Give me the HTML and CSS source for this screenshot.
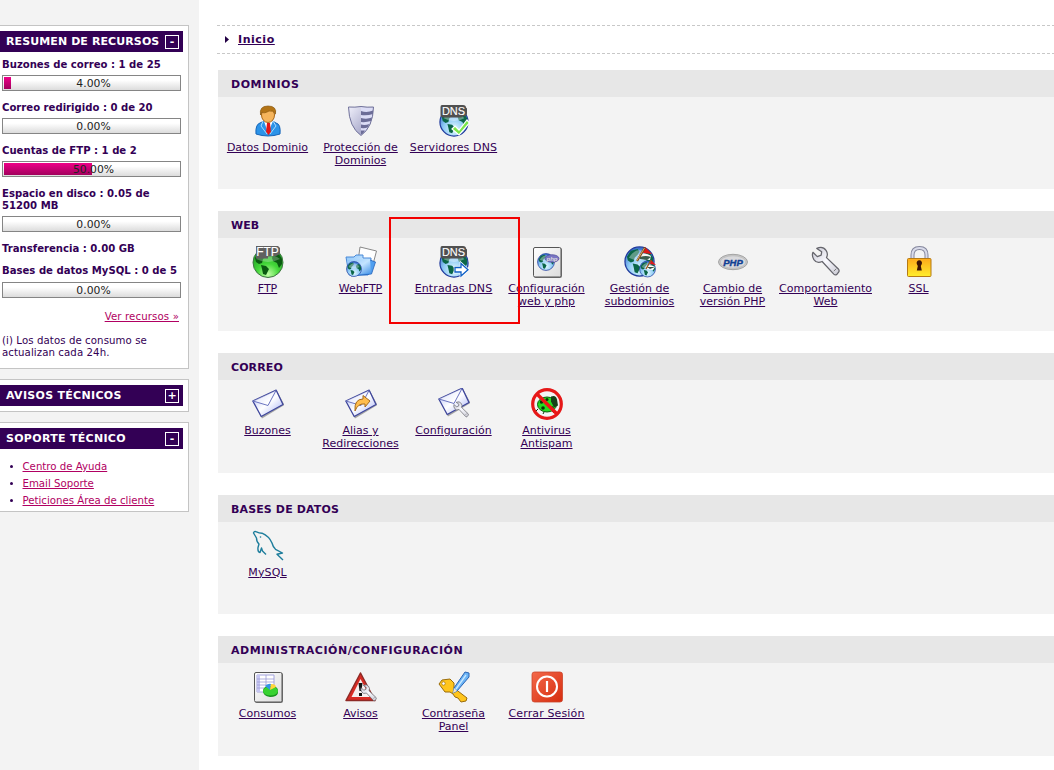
FILE: index.html
```html
<!DOCTYPE html>
<html lang="es">
<head>
<meta charset="utf-8">
<title>Panel de control</title>
<link rel="stylesheet" href="styles.css">
</head>
<body>
<svg class="defs" aria-hidden="true">
  <defs>
    <radialGradient id="gBlue" cx=".5" cy=".75" r=".7"><stop offset="0" stop-color="#e4faff"/><stop offset=".55" stop-color="#8cc9f4"/><stop offset="1" stop-color="#3a72cc"/></radialGradient>
    <radialGradient id="gGreen" cx=".5" cy=".9" r=".8"><stop offset="0" stop-color="#c4ffa8"/><stop offset=".45" stop-color="#45d83a"/><stop offset="1" stop-color="#1c9a22"/></radialGradient>
    <linearGradient id="gEnv" x1="0" y1="0" x2="1" y2="1"><stop offset="0" stop-color="#aab6f4"/><stop offset=".5" stop-color="#fff"/><stop offset="1" stop-color="#a0acf6"/></linearGradient>
    <linearGradient id="gSheet" x1="0" y1="0" x2="1" y2="1"><stop offset="0" stop-color="#fff"/><stop offset="1" stop-color="#dcdcdc"/></linearGradient>
    <linearGradient id="gGold" x1="0" y1="0" x2="0" y2="1"><stop offset="0" stop-color="#ffa91a"/><stop offset="1" stop-color="#ffee2c"/></linearGradient>
    <linearGradient id="gFold" x1="0" y1="0" x2="1" y2="1"><stop offset="0" stop-color="#8cc4f8"/><stop offset=".5" stop-color="#c4e4ff"/><stop offset="1" stop-color="#3d8ee6"/></linearGradient>
    <linearGradient id="gShield" x1="0" y1="0" x2="1" y2="1"><stop offset="0" stop-color="#f0f0fb"/><stop offset="1" stop-color="#8e8fb8"/></linearGradient>
    <linearGradient id="gRed" x1="0" y1="0" x2="1" y2="1"><stop offset="0" stop-color="#f4694a"/><stop offset="1" stop-color="#d62c0e"/></linearGradient>
    <linearGradient id="gSteel" x1="0" y1="0" x2="1" y2="1"><stop offset="0" stop-color="#c3c3cf"/><stop offset=".5" stop-color="#fafaff"/><stop offset="1" stop-color="#c8c8d2"/></linearGradient>
    <symbol id="land" viewBox="0 0 32 32">
      <path d="M3 11L7 5l7-2 2 3-2 3-3 3-1 4-3 1-3-2zM9 18l5 1 3 3-3 6-3-1-1-5zM21 8l5-2 4 6v5l-3 4-2-5-4-2-1-3z"/>
    </symbol>
    <symbol id="globe" viewBox="0 0 32 32">
      <circle cx="16" cy="16" r="15" fill="url(#gBlue)" stroke="#203a9c" stroke-width="1.3"/>
      <use href="#land" fill="#0b6647"/>
      <path d="M5 12Q15-3 27 12 16 18 5 12z" fill="#fff" opacity=".35"/>
    </symbol>
    <symbol id="tag" viewBox="0 0 32 16">
      <path d="M4 0h21q3 0 3 2.500l1 1v5q0 3-4 3l-2 1H5q-2.500 0-2.500-3V2Q2.500 0 4 0z" fill="#505050"/>
    </symbol>
    <symbol id="wrench" viewBox="0 0 32 32">
      <path d="M6 2.500Q12-.5 15.500 4.500 18 8 16 12L28.500 24Q29.500 25.500 28.500 27L26.500 29.500Q25 30.500 23.500 29L11.500 16Q6 18.500 3 14 .5 10 2 6.500L6.500 11 10.500 9.500 11 6z" fill="url(#gSteel)" stroke="#65656c" stroke-width="1.300" stroke-linejoin="round"/>
      <path d="M23.500 26L26 23.500" stroke="#777" fill="none"/>
    </symbol>
    <symbol id="envelope" viewBox="0 0 32 32">
      <path d="M1.500 14L25 3 32.500 17 10 30.500z" fill="#444" opacity=".45"/>
      <path d="M.8 13L24.200 2.200 31 16.500 9.200 28.500z" fill="url(#gEnv)" stroke="#3e469c" stroke-width="1.300" stroke-linejoin="round"/>
      <path d="M1 13L16 17.500 24 2.500" fill="#fff" fill-opacity=".5" stroke="#6b74c0" stroke-width="1"/>
    </symbol>
    <symbol id="sheet" viewBox="0 0 32 32">
      <rect x="3" y="2" width="28" height="30" rx="2" fill="#777"/>
      <rect x="2.500" y="1.500" width="27.500" height="29.500" rx="1.500" fill="url(#gSheet)" stroke="#555"/>
    </symbol>
  </defs>
</svg>

<div class="page">
  <aside class="sidebar">
    <section class="panel panel-usage">
      <h2 class="panel-title"><span class="track-s">RESUMEN DE RECURSOS</span><span class="toggle">-</span></h2>
      <div class="usage">
        <p class="usage-label">Buzones de correo : 1 de 25</p>
        <div class="meter"><span class="fill" style="width:4%"></span><span class="value">4.00%</span></div>
        <p class="usage-label">Correo redirigido : 0 de 20</p>
        <div class="meter"><span class="value">0.00%</span></div>
        <p class="usage-label">Cuentas de FTP : 1 de 2</p>
        <div class="meter"><span class="fill" style="width:50%"></span><span class="value">50.00%</span></div>
        <p class="usage-label">Espacio en disco : 0.05 de 51200 MB</p>
        <div class="meter"><span class="value">0.00%</span></div>
        <p class="usage-label plain">Transferencia : 0.00 GB</p>
        <p class="usage-label last">Bases de datos MySQL : 0 de 5</p>
        <div class="meter"><span class="value">0.00%</span></div>
        <p class="more"><a href="#">Ver recursos »</a></p>
        <p class="note">(i) Los datos de consumo se actualizan cada 24h.</p>
      </div>
    </section>
    <section class="panel panel-closed">
      <h2 class="panel-title"><span class="track-m">AVISOS TÉCNICOS</span><span class="toggle">+</span></h2>
    </section>
    <section class="panel panel-support">
      <h2 class="panel-title"><span class="track-m">SOPORTE TÉCNICO</span><span class="toggle">-</span></h2>
      <ul class="links">
        <li><a href="#">Centro de Ayuda</a></li>
        <li><a href="#">Email Soporte</a></li>
        <li><a href="#">Peticiones Área de cliente</a></li>
      </ul>
    </section>
  </aside>

  <main class="main">
    <nav class="crumbs"><svg class="arrow" viewBox="0 0 4 7"><path d="M0 0L4 3.500 0 7z"/></svg><a class="track-l" href="#">Inicio</a></nav>

    <section class="group">
      <h2 class="group-title track-l">DOMINIOS</h2>
      <div class="items">
        <a class="item" href="#">
          <svg class="icon" viewBox="0 0 32 32">
            <path d="M4 29Q3 19 9 17.500L14 15h5l5 3q5 1 4 11-12 4-24 0z" fill="#2b93e8" stroke="#1565b8"/>
            <path d="M12 16l4 12 5-12z" fill="#fff"/><path d="M15 18h3l1 9-2.500 3-2.500-3z" fill="#e31616"/>
            <path d="M11 16l-2 5 6 8M21 16l3 5-6 8" fill="none" stroke="#a9dcff"/>
            <ellipse cx="16" cy="10" rx="6.500" ry="7.500" fill="#f5b45b" stroke="#a86514"/>
            <path d="M8.500 10Q7 1 16 1q9 0 7.500 8Q21 5 17 6 12 9 10 7z" fill="#b37416" stroke="#8a560b" stroke-width=".7"/>
          </svg>
          <span class="name">Datos Dominio</span></a>
        <a class="item" href="#">
          <svg class="icon" viewBox="0 0 32 32">
            <path d="M3.500 2Q10 2.500 16 1.500 22 2.500 28.500 2 28 22 16 30.500 4 22 3.500 2z" fill="url(#gShield)"/>
            <path d="M16 2Q22 3 28 2.500 27.500 22 16 30z" fill="#dcddf6"/>
            <path d="M16 6q6 2 12-.5v3.500q-6 2-12 1zM16 13q6 1.500 11-.5l-1 3.500q-5 1.500-10 1zM16 19.500q4 1 8.500-.5l-2 3.500q-3 1-6.500.5zM16 25.500h4l-2 3-2 1z" fill="#6c6d97"/>
            <path d="M3.500 2Q10 2.500 16 1.500 22 2.500 28.500 2 28 22 16 30.500 4 22 3.500 2z" fill="none" stroke="#70719a"/>
          </svg>
          <span class="name">Protección de Dominios</span></a>
        <a class="item" href="#">
          <svg class="icon" viewBox="0 0 32 32">
            <use href="#globe" x="1" y="2" width="30" height="30"/>
            <use href="#tag" width="32" height="16"/><text class="tag-text" x="15.500" y="10">DNS</text>
            <path d="M14 24l3-3 4 4 8-10 2.500 3L21 30z" fill="#7be64a" stroke="#fff" stroke-width="1.200"/>
          </svg>
          <span class="name track-xs">Servidores DNS</span></a>
      </div>
    </section>

    <section class="group">
      <h2 class="group-title">WEB</h2>
      <div class="items">
        <a class="item" href="#">
          <svg class="icon" viewBox="0 0 32 32">
            <circle cx="16" cy="16.500" r="15" fill="url(#gGreen)" stroke="#3d7340"/>
            <use href="#land" width="32" height="32" y="1" fill="#0a5a10"/>
            <path d="M4 13Q16 4 28 13 16 19 4 13z" fill="#fff" opacity=".25"/>
            <path d="M4 0h22l2 2v6l-4 2-8 .500v2H4z" fill="#606060"/>
            <text class="tag-text ftp" x="15.500" y="10">FTP</text>
          </svg>
          <span class="name">FTP</span></a>
        <a class="item" href="#">
          <svg class="icon" viewBox="0 0 32 32">
            <path d="M15 1l16.500 4-5 19-14-5z" fill="#fff" stroke="#888"/>
            <path d="M1 11h8l2-2h7v3h8v14L23 29H4z" fill="url(#gFold)" stroke="#4a8ad8"/>
            <path d="M25 14l5.500 2-4 12-20 2z" fill="#4f9ff0" stroke="#2561b8" stroke-width=".8"/>
            <path d="M2 14l23-1 1 14-20 2z" fill="url(#gFold)"/>
            <use href="#globe" x="1" y="15" width="16" height="16"/>
          </svg>
          <span class="name">WebFTP</span></a>
        <a class="item marked" href="#">
          <svg class="icon" viewBox="0 0 32 32">
            <use href="#globe" x="1" y="2" width="30" height="30"/>
            <use href="#tag" width="32" height="16"/><text class="tag-text" x="15.500" y="10">DNS</text>
            <path d="M17 21.500h6V17.500l7 6.200-7 6.300v-4h-6z" fill="#1687e4" stroke="#fff" stroke-width="2.600"/>
            <path d="M17 21.500h6V17.500l7 6.200-7 6.300v-4h-6z" fill="#fff" stroke="#0d5fc6" stroke-width="1.300"/>
          </svg>
          <span class="name track-xs">Entradas DNS</span></a>
        <a class="item" href="#">
          <svg class="icon" viewBox="0 0 32 32">
            <use href="#sheet" width="32" height="32"/>
            <use href="#globe" x="6" y="7" width="18" height="18"/>
            <ellipse cx="21" cy="12.500" rx="7" ry="3.800" fill="#7a76c4" stroke="#504c98" stroke-width=".7"/>
            <text class="mini-php" x="21" y="14.500">php</text>
          </svg>
          <span class="name">Configuración web y php</span></a>
        <a class="item" href="#">
          <svg class="icon" viewBox="0 0 32 32">
            <use href="#globe" width="31" height="31"/>
            <use href="#globe" x="15" y="14" width="17" height="18"/>
            <path d="M14 9q8-3 13 1l-1 4-10-1z" fill="#f4f7f4"/><path d="M16 11q6-2 11 0l-4 3-7-1z" fill="#3c5c4c"/>
            <path d="M21 1l7 7-9-1z" fill="#e01818"/><path d="M21 1.500L13 15" stroke="#7c4a14" stroke-width="2.200"/><path d="M20.500 2L12.500 15" stroke="#dcb076" stroke-width=".9"/>
            <path d="M22 20q5-2 9 1l-2 3-7-1z" fill="#fff"/><path d="M23 21l8 0-5 2z" fill="#36503e"/>
            <path d="M27 14l5 5-6-1z" fill="#e01818"/><path d="M27 14l-5 9" stroke="#9a5a1c" stroke-width="1.400"/>
          </svg>
          <span class="name">Gestión de subdominios</span></a>
        <a class="item" href="#">
          <svg class="icon" viewBox="0 0 32 32">
            <ellipse cx="16" cy="16" rx="14.500" ry="7.700" fill="#c9c9c9" stroke="#a4a4a4"/>
            <ellipse cx="16" cy="16" rx="12.800" ry="6.200" fill="#d9d9dc" stroke="#b4b4b4" stroke-width=".6"/>
            <text class="php" x="16" y="19.500">PHP</text>
          </svg>
          <span class="name">Cambio de versión PHP</span></a>
        <a class="item" href="#">
          <svg class="icon" viewBox="0 0 32 32"><use href="#wrench" x="1" y="0" width="31" height="31"/></svg>
          <span class="name">Comportamiento Web</span></a>
        <a class="item" href="#">
          <svg class="icon" viewBox="0 0 32 32">
            <path d="M9.500 14V9q0-7 7-7t7 7v5" fill="none" stroke="#84869c" stroke-width="4"/>
            <path d="M9.500 14V9q0-7 7-7t7 7v5" fill="none" stroke="#d9dbea" stroke-width="2"/>
            <rect x="4.500" y="12.500" width="23.500" height="18" rx="1" fill="url(#gGold)" stroke="#b57a14"/>
            <path d="M13.800 18a2.700 2.700 0 1 1 5 0l-1 2 1 4.500h-5l1-4.500z" fill="#3d1304"/>
          </svg>
          <span class="name">SSL</span></a>
      </div>
    </section>

    <section class="group">
      <h2 class="group-title track-s">CORREO</h2>
      <div class="items">
        <a class="item" href="#">
          <svg class="icon" viewBox="0 0 32 32"><use href="#envelope" width="32" height="32"/></svg>
          <span class="name">Buzones</span></a>
        <a class="item" href="#">
          <svg class="icon" viewBox="0 0 32 32">
            <use href="#envelope" width="32" height="32"/>
            <path d="M10 23Q9 11 18 11V7.500l7 5.500-5 6v-3q-7-1-10 7z" fill="#ffbd4e" stroke="#a36a1e" stroke-linejoin="round"/>
          </svg>
          <span class="name">Alias y Redirecciones</span></a>
        <a class="item" href="#">
          <svg class="icon" viewBox="0 0 32 32">
            <use href="#envelope" y="-2" width="32" height="32"/>
            <use href="#wrench" x="15" y="13" width="17" height="17"/>
          </svg>
          <span class="name">Configuración</span></a>
        <a class="item" href="#">
          <svg class="icon" viewBox="0 0 32 32">
            <ellipse cx="16" cy="16.500" rx="9.500" ry="7.500" fill="#22dd1f" stroke="#095a09"/>
            <path d="M20 8.500q5-2 6 3l1 6-4 2-3-6z" fill="#164019"/>
            <g fill="#07330a"><circle cx="10.500" cy="14" r="1.800"/><circle cx="16" cy="11.500" r="1.500"/><circle cx="12" cy="20" r="1.800"/><circle cx="21" cy="20" r="1.800"/><path d="M7 21l-2 2M13 24l-1 2M21 23l2 2" stroke="#07330a"/></g>
            <path d="M5.500 5.500l21 21" stroke="#ed1616" stroke-width="3.500"/>
            <circle cx="16" cy="16" r="14.300" fill="none" stroke="#e61818" stroke-width="3.200"/>
          </svg>
          <span class="name">Antivirus Antispam</span></a>
      </div>
    </section>

    <section class="group">
      <h2 class="group-title track-xs">BASES DE DATOS</h2>
      <div class="items">
        <a class="item" href="#">
          <svg class="icon" viewBox="0 0 32 32">
            <path d="M14 24.500l-3.500-3.500-1-3-1.500 4.500q-2.500-.5-2-5l1-3.500Q4.500 12 4.500 8L1.500 3Q2 1 4.500 1.800 7 3 10 3.200q7 3 10 9.800 1 4 3.500 6.300L30.500 23l-5.500 1.300 6 5.700" fill="none" stroke="#1d7d9c" stroke-width="1.400" stroke-linejoin="round"/>
            <circle cx="8.500" cy="7" r=".8" fill="#1d7d9c"/>
          </svg>
          <span class="name track-xs">MySQL</span></a>
      </div>
    </section>

    <section class="group">
      <h2 class="group-title track-l">ADMINISTRACIÓN/CONFIGURACIÓN</h2>
      <div class="items">
        <a class="item" href="#">
          <svg class="icon" viewBox="0 0 32 32">
            <use href="#sheet" width="32" height="32"/>
            <path d="M5 4h17v17H5z" fill="#fff" stroke="#a4a4de"/><path d="M5 4h3v17H5z" fill="#c6c6f2"/>
            <path d="M5 8h17M5 11h17M5 14h17M5 17h17M14 4v17" stroke="#9c9cd6" stroke-width=".8"/>
            <path d="M11 20q0-5 8-5 7 0 7 5v2q-1 4-8 4-7-1-7-6z" fill="#15901b"/><ellipse cx="18.500" cy="20" rx="7.500" ry="4.500" fill="#38d231"/>
            <path d="M18 19l-5-4q4-3 6-2z" fill="#3195e5"/><path d="M18 19l1-6q5 0 5 3z" fill="#ffd63a"/>
          </svg>
          <span class="name">Consumos</span></a>
        <a class="item" href="#">
          <svg class="icon" viewBox="0 0 32 32">
            <path d="M15.500 2L30 29.500H1z" fill="#d72b24" stroke="#8e2a26" stroke-width="1.500" stroke-linejoin="round"/>
            <path d="M15.500 8L25 26H6.500z" fill="#f5efef"/>
            <path d="M13.500 12h4l-1 8h-2zM14 22h3v3h-3z" fill="#111"/>
            <use href="#wrench" x="15" y="13" width="18" height="18"/>
          </svg>
          <span class="name">Avisos</span></a>
        <a class="item" href="#">
          <svg class="icon" viewBox="0 0 32 32">
            <path d="M1 13L4 9l8-1 4 4v5l13 10-1 3-5 1-3-4-3-1-2-3-3-2H7z" fill="#ffc51c" stroke="#9a6c0b" stroke-linejoin="round"/>
            <circle cx="5.500" cy="12.500" r="1.700" fill="#fff" stroke="#9a6c0b" stroke-width=".7"/>
            <path d="M27 1l4 1v4L19 20l-4 2 1-5z" fill="#6bb4f6" stroke="#2a64b4"/><path d="M28 4L18 18" stroke="#c9e8fe" stroke-width="1.300"/><path d="M16 17l3 3-4 2z" fill="#f6e7c4"/>
          </svg>
          <span class="name">Contraseña Panel</span></a>
        <a class="item" href="#">
          <svg class="icon" viewBox="0 0 32 32">
            <rect x="1" y="1" width="30.500" height="30" rx="2.500" fill="url(#gRed)" stroke="#c9452c" stroke-width=".8"/>
            <circle cx="16" cy="15.500" r="10" fill="none" stroke="#fff" stroke-width="2"/><path d="M16 10v11" stroke="#fff" stroke-width="2.200"/>
          </svg>
          <span class="name track-xs">Cerrar Sesión</span></a>
      </div>
    </section>
  </main>
</div>
</body>
</html>
```

FILE: styles.css
```css
*, *::after { box-sizing: border-box; }
body { margin: 0; background: #fff; color: #330055; font: 11px/13px "DejaVu Sans", sans-serif; overflow: hidden; }
h2, p, ul { margin: 0; padding: 0; }
.defs { position: absolute; width: 0; height: 0; }

.page { display: flex; height: 770px; }

.sidebar { flex: none; width: 199px; padding: 25px 10px 0 0; background: #f3f3f3; font-size: 10.2px; line-height: 12px; }
.panel { margin-bottom: 10px; padding: 5px 5px 0 0; background: #fff; border: 1px solid #c4c4c4; border-left: 0; }
.panel-usage { height: 344px; }
.panel-closed { height: 33px; }
.panel-support { height: 90px; }
.panel-title { display: flex; align-items: center; justify-content: space-between; height: 21px; padding: 1px 4px 0 6px; background: #330055; color: #fff; font-size: 11px; line-height: 20px; white-space: nowrap; }
.toggle { flex: none; width: 14px; height: 14px; border: 1px solid #fff; line-height: 12px; text-align: center; }

.usage { padding: 7px 2px 0; }
.usage-label { margin-bottom: 4px; font-size: 10.1px; font-weight: bold; }
.usage-label.plain { margin-bottom: 10px; }
.usage-label.last { margin-bottom: 5px; }
.meter { display: grid; height: 16px; margin-bottom: 11px; padding: 1px; border: 1px solid #858585; background: linear-gradient(#fff 30%, #dcdcdc); color: #222; font-size: 10.800px; line-height: 14px; }
.meter > span { grid-area: 1 / 1; }
.fill { height: 12px; background: linear-gradient(#ee0088, #a1005d); }
.value { height: 12px; padding-left: 4px; text-align: center; }
.more { padding: 2px 2px 12px 0; text-align: right; letter-spacing: .12px; }
.note { letter-spacing: .08px; }
.sidebar a { color: #b10062; }

.links { padding: 9px 0 0 22.500px; line-height: 17px; }

.main { flex: 1; min-width: 0; padding: 25px 0 0 18px; }
.crumbs { display: flex; align-items: center; height: 29px; margin: 0 0 15.800px; padding-left: 8px; font-weight: bold; background: repeating-linear-gradient(90deg, #c8c8c8 0 3px, transparent 3px 5px) 0 0 / 100% 1px no-repeat, repeating-linear-gradient(90deg, #c8c8c8 0 3px, transparent 3px 5px) 0 100% / 100% 1px no-repeat; }
.arrow { width: 4px; height: 7px; margin-right: 9px; fill: #220044; }
a { color: #330055; }

.group { height: 119.600px; margin-left: 1px; margin-bottom: 22px; background: #f3f3f3; }
.group-title { height: 27px; padding: 1px 0 0 13px; background: #e7e7e7; font-size: 11px; line-height: 27px; }
.items { display: flex; padding: 8px 0 0 3px; }
.item { position: relative; display: flex; flex-direction: column; align-items: center; gap: 4px; width: 93px; text-align: center; text-decoration: none; }
.icon { display: block; width: 32px; height: 32px; }
.name { text-decoration: underline; }
.marked::after { content: ""; position: absolute; z-index: 1; left: -18px; top: -29px; width: 131px; height: 107px; border: 2px solid #f30000; }

.track-xs { letter-spacing: .13px; }
.track-s { letter-spacing: .1px; }
.track-m { letter-spacing: .3px; }
.track-l { letter-spacing: .54px; }

.tag-text { font: 11px "Liberation Sans", sans-serif; fill: #fff; text-anchor: middle; stroke: #fff; stroke-width: .1px; }
.ftp { font-size: 12px; }
.mini-php { font: italic bold 6px "Liberation Sans", sans-serif; fill: #ddd; text-anchor: middle; }
.php { font: italic bold 9.500px "Liberation Sans", sans-serif; fill: #123f93; stroke: #123f93; stroke-width: .4px; text-anchor: middle; }
```
